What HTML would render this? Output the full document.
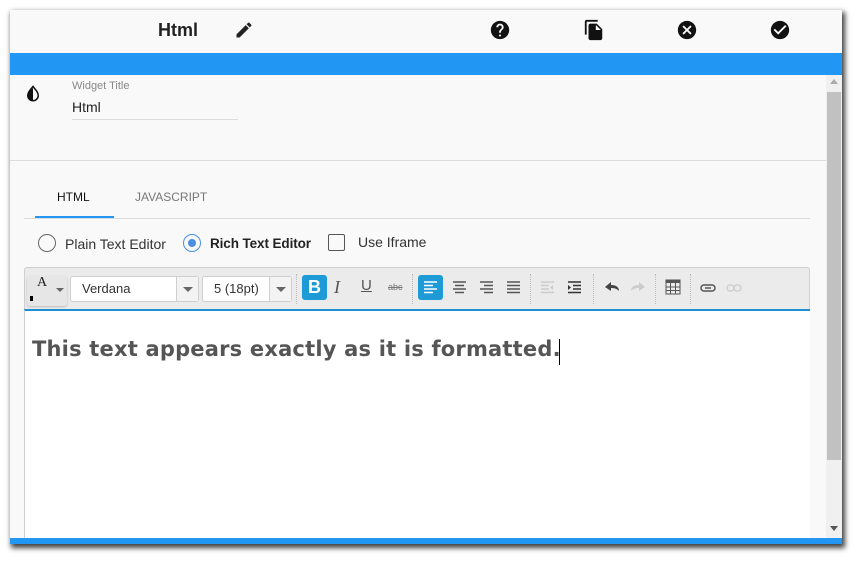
<!DOCTYPE html>
<html><head><style>
*{box-sizing:border-box;margin:0;padding:0}
body{width:860px;height:562px;background:#fff;font-family:"Liberation Sans",Arial,sans-serif;position:relative;overflow:hidden}
.win{position:absolute;left:10px;top:10px;width:832px;height:534px;background:#f9f9f9;box-shadow:2px 3px 5px 1px rgba(0,0,0,.75);overflow:hidden}
.hdr{position:absolute;left:0;top:0;width:832px;height:43px;background:#f9f9f9}
.blue{position:absolute;left:0;top:43px;width:832px;height:22px;background:#2196f3}
.abs{position:absolute}
.sb{position:absolute;left:816px;top:65px;width:16px;height:463px;background:#f0f0f0}
.thumb{position:absolute;left:817px;top:82px;width:14px;height:368px;background:#c1c1c1}
.bot{position:absolute;left:0;top:528px;width:832px;height:6px;background:#2196f3}
.tb{position:absolute;left:14px;top:257px;width:786px;height:44px;background:#ebebeb;border:1px solid #cfcfcf;border-bottom:none;border-radius:3px 3px 0 0}
.ed{position:absolute;left:14px;top:299px;width:786px;height:230px;background:#fff;border-top:2px solid #1e8fd0;border-left:1px solid #cfcfcf}
.sel{position:absolute;top:266px;height:26px;background:#fff;border:1px solid #cfcfcf;border-radius:3px;font-size:13px;color:#333;line-height:24px;padding-left:11px}
.sel .dd{position:absolute;right:0;top:0;width:22px;height:24px;border-left:1px solid #cfcfcf;background:#f3f3f3}
.sel .dd:after{content:"";position:absolute;left:6px;top:10px;border:5px solid transparent;border-top:5px solid #666}
.sep{position:absolute;top:264px;width:0;height:30px;border-left:1px dotted #bbb}
.ic{position:absolute;top:267px;font-size:14px;color:#555}
</style></head><body>
<div class="win">
<div class="hdr">
<div class="abs" style="left:148px;top:10px;font-size:18px;font-weight:bold;color:#222">Html</div>
<svg class="abs" style="left:224px;top:10px" width="20" height="20" viewBox="0 0 24 24"><path d="M3 17.25V21h3.75L17.81 9.94l-3.75-3.75L3 17.25zM20.71 7.04a1 1 0 000-1.41l-2.34-2.34a1 1 0 00-1.41 0l-1.830 1.83 3.75 3.75 1.83-1.83z" fill="#222"/></svg>
<svg class="abs" style="left:479px;top:9px" width="22" height="22" viewBox="0 0 24 24"><path d="M12 2C6.48 2 2 6.48 2 12s4.48 10 10 10 10-4.48 10-10S17.52 2 12 2zm1 17h-2v-2h2v2zm2.07-7.750l-.9.92C13.45 12.9 13 13.5 13 15h-2v-.5c0-1.100.45-2.100 1.170-2.830l1.240-1.260c.37-.36.59-.86.59-1.410 0-1.100-.9-2-2-2s-2 .9-2 2H8c0-2.210 1.790-4 4-4s4 1.790 4 4c0 .88-.36 1.680-.93 2.250z" fill="#111"/></svg>
<svg class="abs" style="left:573px;top:9px" width="22" height="22" viewBox="0 0 24 24"><path d="M16 1H4c-1.1 0-2 .9-2 2v14h2V3h12V1zm-1 4l6 6v10c0 1.1-.9 2-2 2H8c-1.1 0-2-.9-2-2V7c0-1.1.9-2 2-2h7zm-1 7h5.5L14 6.5V12z" fill="#111"/></svg>
<svg class="abs" style="left:666px;top:9px" width="22" height="22" viewBox="0 0 24 24"><path d="M12 2C6.47 2 2 6.47 2 12s4.47 10 10 10 10-4.47 10-10S17.53 2 12 2zm5 13.59L15.59 17 12 13.41 8.41 17 7 15.59 10.59 12 7 8.41 8.41 7 12 10.59 15.59 7 17 8.41 13.41 12 17 15.59z" fill="#111"/></svg>
<svg class="abs" style="left:759px;top:9px" width="22" height="22" viewBox="0 0 24 24"><path d="M12 2C6.48 2 2 6.48 2 12s4.48 10 10 10 10-4.48 10-10S17.52 2 12 2zm-2 15l-5-5 1.41-1.41L10 14.17l7.59-7.59L19 8l-9 9z" fill="#111"/></svg>
</div>
<div class="blue"></div>
<svg class="abs" style="left:14px;top:75px" width="18" height="18" viewBox="0 0 24 24"><path d="M12 2C8 7 5 10 5 14a7 7 0 0014 0c0-4-3-7-7-12z" fill="none" stroke="#111" stroke-width="2"/><path d="M12 4v17a7 7 0 01-7-7c0-4 3-6 7-10z" fill="#111"/></svg>
<div class="abs" style="left:62px;top:70px;font-size:11px;color:#888">Widget Title</div>
<div class="abs" style="left:62px;top:89px;font-size:14px;color:#222">Html</div>
<div class="abs" style="left:62px;top:109px;width:166px;height:1px;background:#ddd"></div>
<div class="abs" style="left:0;top:150px;width:816px;height:1px;background:#ddd"></div>
<div class="abs" style="left:47px;top:180px;font-size:12px;color:#111">HTML</div>
<div class="abs" style="left:125px;top:180px;font-size:12px;color:#777">JAVASCRIPT</div>
<div class="abs" style="left:14px;top:208px;width:786px;height:1px;background:#ddd"></div>
<div class="abs" style="left:25px;top:206px;width:79px;height:2px;background:#2196f3"></div>
<div class="abs" style="left:28px;top:224px;width:18px;height:18px;border:1.5px solid #666;border-radius:50%"></div>
<div class="abs" style="left:55px;top:226px;font-size:14px;color:#333">Plain Text Editor</div>
<div class="abs" style="left:173px;top:224px;width:18px;height:18px;border:1.5px solid #4a90e2;border-radius:50%"><div style="margin:3.5px;width:8px;height:8px;border-radius:50%;background:#4a90e2"></div></div>
<div class="abs" style="left:200px;top:226px;font-size:13.5px;font-weight:bold;color:#222;letter-spacing:-0.1px">Rich Text Editor</div>
<div class="abs" style="left:318px;top:224px;width:17px;height:17px;border:1.5px solid #555;border-radius:2px"></div>
<div class="abs" style="left:348px;top:224px;font-size:14px;color:#333">Use Iframe</div>
<div class="tb"></div>
<div class="abs" style="left:17px;top:266px;width:40px;height:30px;background:#e6e6e6;border-radius:3px;box-shadow:0 1px 2px #bbb"></div>
<div class="abs" style="left:27px;top:265px;font-family:'Liberation Serif',serif;font-size:14px;color:#222">A</div>
<div class="abs" style="left:20px;top:286px;width:3px;height:5px;background:#000"></div>
<div class="abs" style="left:46px;top:278px;border:4px solid transparent;border-top:4px solid #666"></div>
<div class="sel" style="left:60px;width:129px">Verdana<div class="dd"></div></div>
<div class="sel" style="left:192px;width:90px">5 (18pt)<div class="dd"></div></div>
<div class="sep" style="left:286px"></div>
<div class="abs" style="left:292px;top:265px;width:25px;height:25px;background:#1e9bd7;border-radius:3px;color:#fff;font-weight:bold;font-size:18px;text-align:center;line-height:25px">B</div>
<div class="ic" style="left:324px;font-family:'Liberation Serif',serif;font-style:italic;font-size:18px">I</div>
<div class="ic" style="left:351px;text-decoration:underline;font-size:15px">U</div>
<div class="ic" style="left:378px;top:272px;font-size:9px;text-decoration:line-through;color:#777">abc</div>
<div class="sep" style="left:402px"></div>
<div class="abs" style="left:408px;top:265px;width:25px;height:25px;background:#1e9bd7;border-radius:3px"></div>
<svg class="abs" style="left:408px;top:265px" width="130" height="25">
<g stroke-width="1.5">
<g stroke="#fff"><path d="M6 7h13M6 10.5h9M6 14h13M6 17.5h9"/></g>
<g stroke="#555"><path d="M35 7h13M37 10.5h9M35 14h13M37 17.5h9"/><path d="M62 7h13M66 10.5h9M62 14h13M66 17.5h9"/><path d="M89 7h13M89 10.5h13M89 14h13M89 17.5h13"/></g>
</g></svg>
<div class="sep" style="left:520px"></div>
<svg class="abs" style="left:528px;top:265px" width="50" height="25">
<g stroke-width="1.5"><g stroke="#ccc"><path d="M3 7h13M3 10.5h8M3 14h8M3 17.5h13"/></g><path d="M15 10l-3 2.5 3 2.5z" fill="#ccc"/>
<g stroke="#333"><path d="M30 7h13M35 10.5h8M35 14h8M30 17.5h13"/></g><path d="M30 10l3 2.5-3 2.5z" fill="#333"/></g></svg>
<div class="sep" style="left:583px"></div>
<svg class="abs" style="left:590px;top:265px" width="50" height="25"><path d="M5 12l6-5v3c5 0 8 2 8 6-2-2-4-3-8-3v3z" fill="#444"/><path d="M45 12l-6-5v3c-5 0-8 2-8 6 2-2 4-3 8-3v3z" fill="#ccc"/></svg>
<div class="sep" style="left:645px"></div>
<svg class="abs" style="left:655px;top:269px" width="16" height="16"><rect x="1" y="1" width="14" height="14" fill="none" stroke="#555"/><rect x="1" y="1" width="14" height="3" fill="#555"/><path d="M5.5 4v11M10.5 4v11M1 8h14M1 11.5h14" stroke="#555"/></svg>
<div class="sep" style="left:680px"></div>
<svg class="abs" style="left:690px;top:272px" width="50" height="12"><rect x="1" y="3" width="14" height="6" rx="3" fill="none" stroke="#555" stroke-width="1.5"/><path d="M5 6h6" stroke="#555" stroke-width="1.5"/><rect x="27" y="3" width="7" height="6" rx="3" fill="none" stroke="#ccc" stroke-width="1.3"/><rect x="34" y="3" width="7" height="6" rx="3" fill="none" stroke="#ccc" stroke-width="1.3"/></svg>
<div class="ed"></div>
<div class="abs" style="left:22px;top:327px;font-family:'DejaVu Sans',Verdana,sans-serif;font-weight:bold;font-size:21px;color:#555;letter-spacing:0.2px">This text appears exactly as it is formatted.</div>
<div class="abs" style="left:549px;top:329px;width:1px;height:26px;background:#000"></div>
<div class="sb"></div><div class="thumb"></div>
<div class="abs" style="left:820px;top:69px;border:4px solid transparent;border-bottom:5px solid #aaa;border-top:none"></div>
<div class="abs" style="left:820px;top:516px;border:4px solid transparent;border-top:5px solid #555;border-bottom:none"></div>
<div class="bot"></div>
</div>
</body></html>
